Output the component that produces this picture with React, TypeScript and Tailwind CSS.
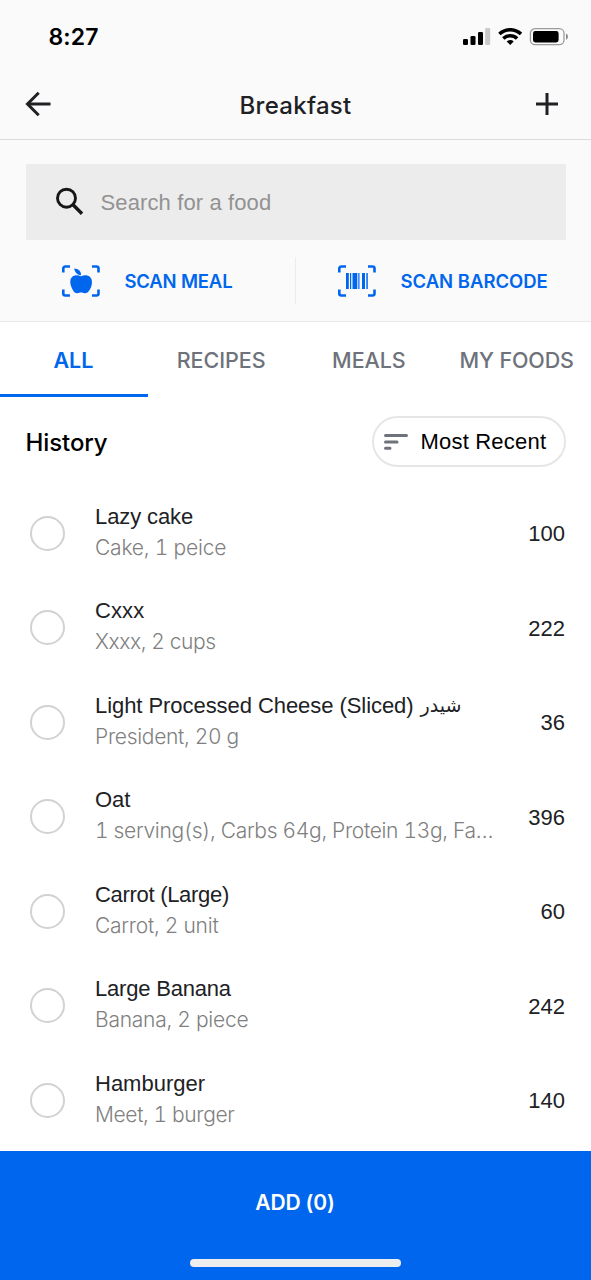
import React from "react";

const foods = [
  { name: "Lazy cake", detail: "Cake, 1 peice", calories: 100, nameTrack: "tracking-[-0.1px]", track: "tracking-[-0.2px]" },
  { name: "Cxxx", detail: "Xxxx, 2 cups", calories: 222, nameTrack: "tracking-[0.1px]", track: "tracking-[-0.4px]" },
  { name: "Light Processed Cheese (Sliced)", arabic: "شيدر", detail: "President, 20 g", calories: 36, nameTrack: "tracking-[-0.06px]", track: "tracking-[-0.3px]" },
  { name: "Oat", detail: "1 serving(s), Carbs 64g, Protein 13g, Fa…", calories: 396, nameTrack: "tracking-[-0.1px]", track: "tracking-[-0.32px]" },
  { name: "Carrot (Large)", detail: "Carrot, 2 unit", calories: 60, nameTrack: "tracking-[-0.3px]", track: "tracking-[-0.25px]" },
  { name: "Large Banana", detail: "Banana, 2 piece", calories: 242, nameTrack: "tracking-[-0.2px]", track: "tracking-[-0.25px]" },
  { name: "Hamburger", detail: "Meet, 1 burger", calories: 140, nameTrack: "tracking-[0px]", track: "tracking-[-0.37px]" },
];

function StatusIcons() {
  return (
    <svg width="106" height="20" viewBox="0 0 106 20" className="block">
      <rect x="0" y="11" width="5" height="6" rx="1.3" />
      <rect x="7.5" y="8" width="5" height="9" rx="1.3" />
      <rect x="15" y="4" width="5" height="13" rx="1.3" />
      <rect x="22.2" y="0" width="5" height="17" rx="1.3" fill="#c9c9c9" />
      <g fill="none" stroke="#000" strokeWidth="3.5">
        <path d="M36.4 6.1a15.5 15.5 0 0 1 21.6 0" />
        <path d="M40.3 10.6a10 10 0 0 1 13.8 0" />
      </g>
      <path d="M47.2 17l-3.5-3.600a5 5 0 0 1 7 0z" />
      <rect x="67.4" y="0.7" width="33.6" height="16" rx="4.6" fill="none" stroke="#9b9b9b" strokeWidth="1.3" />
      <rect x="70" y="3" width="25.6" height="11.4" rx="2.4" />
      <path d="M103 5.5c2.6 1 2.6 5.200 0 6.200z" fill="#8a8a8a" />
    </svg>
  );
}

function Corners() {
  return (
    <path
      d="M1.300 7.500V3.500a2 2 0 0 1 2-2H8M30 1.500h4.500a2 2 0 0 1 2 2V7.500M36.500 24.500v4a2 2 0 0 1-2 2H30M8 30.500H3.300a2 2 0 0 1-2-2V24.500"
      fill="none"
      stroke="#0066ee"
      strokeWidth="2.600"
    />
  );
}

function MealIcon() {
  return (
    <svg width="38" height="32" viewBox="0 0 38 32" className="block" fill="#0066ee">
      <Corners />
      <path d="M19 11.300C15.800 9.800 12.500 9.800 10.300 11.800C7.700 14.200 7.900 18.500 9.500 22.200C10.600 25 12.200 28 15 28.300C16.600 28.500 17.600 27.600 19 27.600C20.500 27.600 21.500 28.500 23.200 28.300C26 28 27.900 25 29 22.200C30.500 18.500 30.400 14.200 27.800 11.800C25.500 9.800 22.200 9.800 19 11.300Z" />
      <path d="M12.300 3.500C16 3.600 19.200 5.800 19 10.300C15.300 10 12.700 7.500 12.300 3.500Z" />
    </svg>
  );
}

function BarcodeIcon() {
  return (
    <svg width="38" height="32" viewBox="0 0 38 32" className="block" fill="#0066ee">
      <Corners />
      <path d="M8 8h2.800v16H8zM12 8h1.200v16H12zM14.500 8h4.800v16h-4.800zM20.300 8h1.200v16h-1.200zM24 8h3v16h-3zM28.300 8h1.500v16h-1.500z" />
    </svg>
  );
}

export default function App() {
  return (
    <div className="flex h-[1280px] w-[591px] flex-col overflow-hidden bg-white font-['Liberation_Sans',sans-serif] text-[#202124]">
      <header className="h-[140px] shrink-0 border-b-[1.5px] border-[#dcdcdc] bg-[#fafafa]">
        <div className="flex h-[69px] items-start justify-between pt-[21px] pr-[22px] pl-[48.500px]">
          <span className="pt-px font-['Inter',sans-serif] text-[23px] leading-[31px] font-semibold tracking-[0.1px] text-black">8:27</span>
          <span className="pt-[7px]"><StatusIcons /></span>
        </div>
        <div className="grid h-[70px] grid-cols-[1fr_auto_1fr] items-center">
          <svg width="28" height="28" viewBox="0 0 28 28" className="ml-[24px] block" fill="none" stroke="#202124" strokeWidth="3">
            <path d="M26.500 14H4" />
            <path d="M14.700 2.800L3.500 14l11.200 11.200" />
          </svg>
          <h1 className="pt-[3px] font-['Inter',sans-serif] text-[24px] leading-[32px] font-medium tracking-[0.300px]">Breakfast</h1>
          <svg width="28" height="28" viewBox="0 0 28 28" className="mr-[30.500px] block justify-self-end" fill="none" stroke="#202124" strokeWidth="3">
            <path d="M14 3v22M3 14h22" />
          </svg>
        </div>
      </header>

      <section className="h-[182px] shrink-0 border-b-[1.5px] border-[#e9e9e9] bg-[#fafafa] pt-[24px]">
        <div className="mx-[25.500px] flex h-[76px] items-center bg-[#ececec] pl-[28px]">
          <svg width="32" height="32" viewBox="0 0 32 32" className="mb-[1px] block" fill="none" stroke="#161616">
            <circle cx="12.500" cy="12.200" r="9" strokeWidth="2.900" />
            <path d="M18.800 18.500l9.200 9.300" strokeWidth="3.400" />
          </svg>
          <span className="ml-[15px] pt-px text-[22px] tracking-[0.120px] text-[#929292]">Search for a food</span>
        </div>
        <div className="flex h-[81px] items-center">
          <button className="flex h-full w-[295px] items-center pl-[61.500px]">
            <MealIcon />
            <span className="ml-[25px] pt-[3px] font-['Inter',sans-serif] text-[18.500px] font-semibold tracking-[-0.180px] text-[#0066ee]">SCAN MEAL</span>
          </button>
          <span className="h-[47px] w-px bg-[#ececec]" />
          <button className="flex h-full flex-1 items-center pl-[41.500px]">
            <BarcodeIcon />
            <span className="ml-[25px] pt-[3px] font-['Inter',sans-serif] text-[18.500px] font-semibold tracking-[-0.020px] whitespace-nowrap text-[#0066ee]">SCAN BARCODE</span>
          </button>
        </div>
      </section>

      <nav className="grid h-[75px] shrink-0 grid-cols-4 font-['Inter',sans-serif] text-[21.500px] font-medium tracking-[-0.050px] whitespace-nowrap text-[#6e727a]">
        <span className="flex items-center justify-center border-b-[3px] border-[#0066ee] pt-[4px] pr-px font-semibold text-[#0066ee]">ALL</span>
        <span className="flex items-center justify-center border-b-[3px] border-transparent pt-[4px] pr-px">RECIPES</span>
        <span className="flex items-center justify-center border-b-[3px] border-transparent pt-[4px] pr-px">MEALS</span>
        <span className="flex items-center justify-center border-b-[3px] border-transparent pt-[4px] pr-px tracking-[-0.120px]">MY FOODS</span>
      </nav>

      <div className="flex h-[89px] shrink-0 items-center justify-between pr-[25.500px] pl-[25.500px] text-black">
        <h2 className="pt-[3px] font-['Inter',sans-serif] text-[24px] font-medium tracking-[-0.100px]">History</h2>
        <button className="flex h-[51px] w-[194px] items-center rounded-full border-2 border-[#e6e6e6] pl-[10.500px]">
          <svg width="24" height="18" viewBox="0 0 24 18" className="block" stroke="#6e727a" strokeWidth="3" strokeLinecap="round">
            <path d="M1.500 2.500h21M1.500 9h11.500M1.500 15.200h4.500" />
          </svg>
          <span className="ml-[12.500px] text-[22px] tracking-[0.200px] whitespace-nowrap">Most Recent</span>
        </button>
      </div>

      <main className="h-[664.500px] shrink-0 overflow-hidden">
        {foods.map((food) => (
          <div key={food.name} className="flex h-[94.500px] items-center pr-[26px] pl-[30px]">
            <span className="size-[35px] shrink-0 rounded-full border-2 border-[#d2d2d2]" />
            <div className="ml-[30px] flex-1 pb-[3px] text-[22px] leading-[31px] whitespace-nowrap">
              <div className={food.nameTrack}>
                {food.name}
                {food.arabic && <span className="ml-[7px] inline-block h-[31px] align-top font-['DejaVu_Sans',sans-serif] text-[19px] tracking-normal">{food.arabic}</span>}
              </div>
              <div className={`font-['Inter',sans-serif] text-[21px] font-light text-[#808080] tabular-nums ${food.track}`}>{food.detail}</div>
            </div>
            <span className="pt-px text-[22px]">{food.calories}</span>
          </div>
        ))}
      </main>

      <footer className="flex flex-1 flex-col items-center bg-[#0066ee]">
        <button className="mt-[36.500px] h-[32px] pr-px font-['Inter',sans-serif] text-[21px] font-semibold tracking-[-0.150px] text-white">ADD (0)</button>
        <span className="mt-[40px] h-[8px] w-[211px] rounded-full bg-[#eeeeee]" />
      </footer>
    </div>
  );
}
